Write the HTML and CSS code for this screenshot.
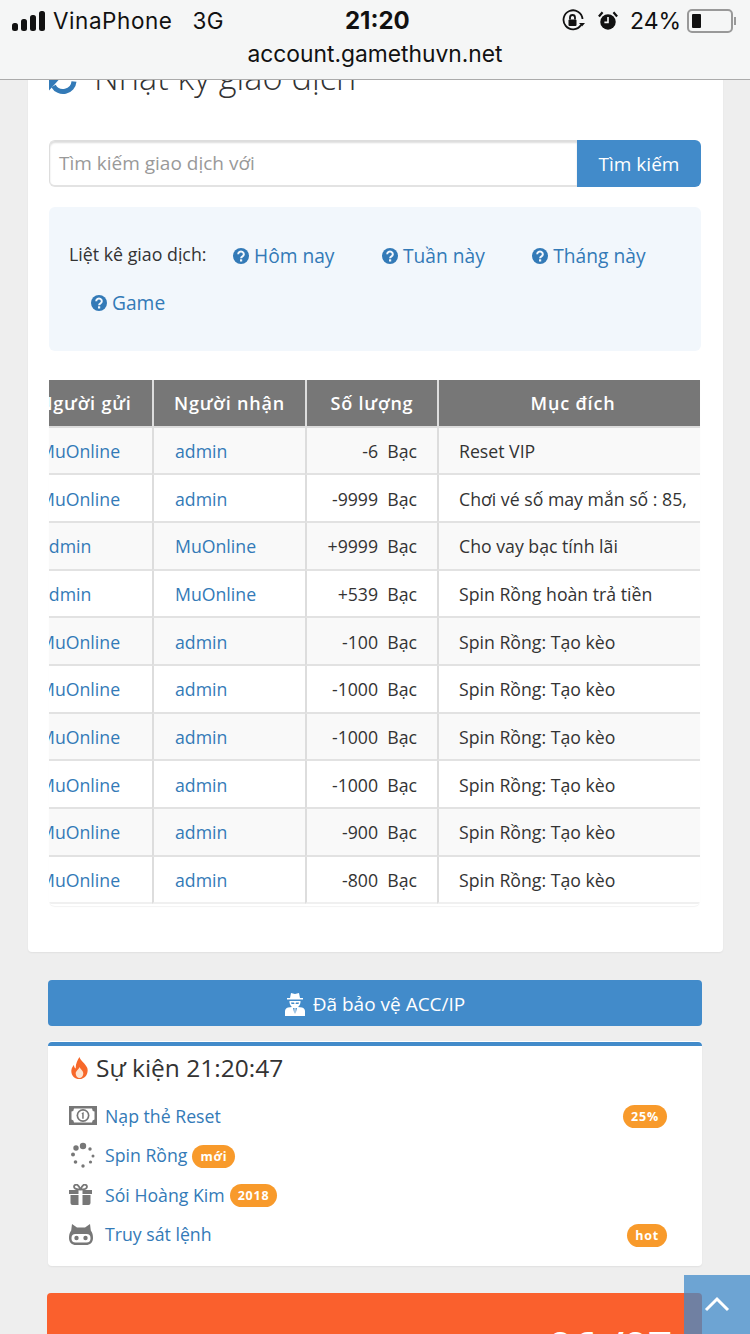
FILE: index.html
```html
<!DOCTYPE html>
<html lang="vi">
<head>
<meta charset="utf-8">
<title>Nhật ký giao dịch</title>
<link rel="stylesheet" href="styles.css">
</head>
<body>
<header class="ios-bar">
  <div class="status">
    <div class="status-left">
      <svg class="signal" width="34" height="20" viewBox="0 0 34 20"><rect x="0" y="12" width="6" height="8" rx="2.5"/><rect x="9" y="8" width="6" height="12" rx="2.5"/><rect x="18" y="4" width="6" height="16" rx="2.5"/><rect x="27" y="0" width="6" height="20" rx="2.5"/></svg>
      <span class="carrier">VinaPhone</span><span class="net">3G</span>
    </div>
    <div class="clock">21:20</div>
    <div class="status-right">
      <svg class="lock" width="24" height="24" viewBox="0 0 24 24" fill="none" stroke="#111" stroke-width="1.8"><path d="M20 16a9.500 9.500 0 1 1 1.500-6"/><path d="M18 14l3 3.500 3-3.500" fill="#111" stroke="none"/><rect x="7.500" y="10.500" width="8" height="6.500" rx="1" fill="#111" stroke="none"/><path d="M9 10.500V8.500a2.500 2.500 0 0 1 5 0v2"/></svg>
      <svg class="alarm" width="20" height="22" viewBox="0 0 22 22"><circle cx="11" cy="12" r="8.500" fill="#111"/><path d="M11 6.500V12.500H7" stroke="#f5f6f6" stroke-width="1.800" fill="none"/><path d="M1 6l4-4.500M21 6l-4-4.500" stroke="#111" stroke-width="2.500"/></svg>
      <span class="pct">24%</span>
      <div class="battery"><i class="level"></i></div><i class="nub"></i>
    </div>
  </div>
  <div class="url">account.gamethuvn.net</div>
</header>

<main class="page">
  <section class="card">
    <h1 class="title">
      <svg class="refresh" width="29" height="29" viewBox="0 0 29 29" fill="none"><path d="M25 15.500a11 11 0 0 1-20.500 4.500" stroke="#337ab7" stroke-width="5"/><path d="M0 13.500h10l-10 11z" fill="#337ab7"/><path d="M4 13a11 11 0 0 1 20-5" stroke="#337ab7" stroke-width="5"/></svg>
      <span>Nhật ký giao dịch</span>
    </h1>

    <form class="search">
      <div class="search-input">Tìm kiếm giao dịch với</div>
      <div class="search-btn">Tìm kiếm</div>
    </form>

    <div class="filter">
      <div class="filter-row">
        <span class="filter-label">Liệt kê giao dịch:</span>
        <a class="filter-link"><svg class="q" viewBox="0 0 16 16"><circle cx="8" cy="8" r="8"/><path d="M5.200 6.200a2.800 2.600 0 1 1 4.300 2.200c-1 .6-1.400 1-1.400 1.800" fill="none" stroke="#f2f7fc" stroke-width="2"/><rect x="7" y="11.300" width="2.200" height="2.200" fill="#f2f7fc"/></svg>Hôm nay</a>
        <a class="filter-link"><svg class="q" viewBox="0 0 16 16"><circle cx="8" cy="8" r="8"/><path d="M5.200 6.200a2.800 2.600 0 1 1 4.300 2.200c-1 .6-1.400 1-1.400 1.800" fill="none" stroke="#f2f7fc" stroke-width="2"/><rect x="7" y="11.300" width="2.200" height="2.200" fill="#f2f7fc"/></svg>Tuần này</a>
        <a class="filter-link"><svg class="q" viewBox="0 0 16 16"><circle cx="8" cy="8" r="8"/><path d="M5.200 6.200a2.800 2.600 0 1 1 4.300 2.200c-1 .6-1.400 1-1.400 1.800" fill="none" stroke="#f2f7fc" stroke-width="2"/><rect x="7" y="11.300" width="2.200" height="2.200" fill="#f2f7fc"/></svg>Tháng này</a>
      </div>
      <div class="filter-row second">
        <a class="filter-link"><svg class="q" viewBox="0 0 16 16"><circle cx="8" cy="8" r="8"/><path d="M5.200 6.200a2.800 2.600 0 1 1 4.300 2.200c-1 .6-1.400 1-1.400 1.800" fill="none" stroke="#f2f7fc" stroke-width="2"/><rect x="7" y="11.300" width="2.200" height="2.200" fill="#f2f7fc"/></svg>Game</a>
      </div>
    </div>

    <div class="table-wrap">
      <table class="tx">
        <colgroup><col class="c1"><col class="c2"><col class="c3"><col class="c4"></colgroup>
        <thead>
          <tr><th>Người gửi</th><th>Người nhận</th><th>Số lượng</th><th>Mục đích</th></tr>
        </thead>
        <tbody>
          <tr><td><a>MuOnline</a></td><td><a>admin</a></td><td class="amt">-6&nbsp; Bạc</td><td>Reset VIP</td></tr>
          <tr><td><a>MuOnline</a></td><td><a>admin</a></td><td class="amt">-9999&nbsp; Bạc</td><td>Chơi vé số may mắn số : 85,</td></tr>
          <tr><td><a>admin</a></td><td><a>MuOnline</a></td><td class="amt">+9999&nbsp; Bạc</td><td>Cho vay bạc tính lãi</td></tr>
          <tr><td><a>admin</a></td><td><a>MuOnline</a></td><td class="amt">+539&nbsp; Bạc</td><td>Spin Rồng hoàn trả tiền</td></tr>
          <tr><td><a>MuOnline</a></td><td><a>admin</a></td><td class="amt">-100&nbsp; Bạc</td><td>Spin Rồng: Tạo kèo</td></tr>
          <tr><td><a>MuOnline</a></td><td><a>admin</a></td><td class="amt">-1000&nbsp; Bạc</td><td>Spin Rồng: Tạo kèo</td></tr>
          <tr><td><a>MuOnline</a></td><td><a>admin</a></td><td class="amt">-1000&nbsp; Bạc</td><td>Spin Rồng: Tạo kèo</td></tr>
          <tr><td><a>MuOnline</a></td><td><a>admin</a></td><td class="amt">-1000&nbsp; Bạc</td><td>Spin Rồng: Tạo kèo</td></tr>
          <tr><td><a>MuOnline</a></td><td><a>admin</a></td><td class="amt">-900&nbsp; Bạc</td><td>Spin Rồng: Tạo kèo</td></tr>
          <tr><td><a>MuOnline</a></td><td><a>admin</a></td><td class="amt">-800&nbsp; Bạc</td><td>Spin Rồng: Tạo kèo</td></tr>
        </tbody>
      </table>
    </div>
  </section>

  <div class="protect">
    <svg width="20" height="24" viewBox="0 0 20 24"><path d="M5 6l1-5 4 1 4-1 1 5h3v1.500H2V6z" fill="#fff"/><path d="M4.500 9h11c.3 2.500-1 5-2.500 6l4 .5c2 .5 3 2 3 4V24H0v-4.500c0-2 1-3.500 3-4l4-.5C5.500 14 4.200 11.500 4.500 9z" fill="#fff"/><path d="M6 10.500h3l.5 1.500H6.500zM11 10.500h3l-.5 1.500h-3z" fill="#428bca"/><path d="M8 16l1.500 6V16zM12 16l-1.500 6V16z" fill="#428bca"/></svg>
    <span>Đã bảo vệ ACC/IP</span>
  </div>

  <section class="events">
    <h2 class="events-title">
      <svg width="17" height="22" viewBox="0 0 17 22"><path d="M8.500 0c1 4 6 6.500 7.800 11 1.500 5-2 11-7.800 11S-.5 17 .5 12.500c.4-2 1.500-3.500 2.500-4.500 0 2 .7 3 1.700 3.500C4.500 7 6.500 3 8.500 0z" fill="#f7682a"/><path d="M8.500 10c.8 2 3.800 3.500 3.800 6.500 0 2.500-1.800 4.500-3.800 4.500s-3.800-2-3.800-4.500c0-2.500 3-4 3.800-6.500z" fill="#fde3cf"/></svg>
      <span>Sự kiện 21:20:47</span>
    </h2>
    <ul class="event-list">
      <li class="event">
        <span class="ev-icon"><svg width="28" height="19" viewBox="0 0 28 19"><rect width="28" height="19" fill="#777"/><path d="M5 2.500h18a3 3 0 0 0 2.500 3v8a3 3 0 0 0-2.500 3H5a3 3 0 0 0-2.500-3v-8A3 3 0 0 0 5 2.500z" fill="#fff"/><circle cx="14" cy="9.500" r="6.500" fill="#777"/><circle cx="14" cy="9.500" r="4.800" fill="#fff"/><path d="M12.500 7.300l2.200-1.300v6.800h-1.500V8.200z" fill="#777"/></svg></span>
        <a>Nạp thẻ Reset</a><span class="badge end">25%</span>
      </li>
      <li class="event">
        <span class="ev-icon"><svg width="26" height="26" viewBox="0 0 26 26" fill="#777"><circle cx="14" cy="4" r="3.200"/><circle cx="7" cy="6" r="2.700"/><circle cx="21" cy="7" r="1.700"/><circle cx="4" cy="12.500" r="2"/><circle cx="24" cy="14" r="1.500"/><circle cx="6.500" cy="20" r="1.800"/><circle cx="21.500" cy="20" r="1.600"/><circle cx="14" cy="24" r="1.700"/></svg></span>
        <a>Spin Rồng</a><span class="badge">mới</span>
      </li>
      <li class="event">
        <span class="ev-icon"><svg width="23" height="21" viewBox="0 0 23 21"><path d="M0 6h9.500v4H0zM13.500 6H23v4h-9.500zM1.500 11h8v10h-6a2 2 0 0 1-2-2zM13.500 11h8v8a2 2 0 0 1-2 2h-6z" fill="#777"/><path d="M11.500 5.500C8 5.500 5 4.500 5 2.700 5 1 7 0 8.500 1s3 4.500 3 4.500zm0 0c3.500 0 6.500-1 6.500-2.800C18 1 16 0 14.500 1s-3 4.500-3 4.500z" fill="none" stroke="#777" stroke-width="1.800"/></svg></span>
        <a>Sói Hoàng Kim</a><span class="badge">2018</span>
      </li>
      <li class="event">
        <span class="ev-icon"><svg width="24" height="21" viewBox="0 0 24 21"><path d="M3 0l5 3.500h8L21 0l.8 6.500C23.500 9 24 11 24 14c0 4.500-3 7-7 7H7c-4 0-7-2.500-7-7 0-3 .5-5 2.200-7.500z" fill="#777"/><rect x="2.500" y="10" width="19" height="8.500" rx="4" fill="#fff"/><circle cx="7.500" cy="14" r="2.200" fill="#777"/><circle cx="16.500" cy="14" r="2.200" fill="#777"/></svg></span>
        <a>Truy sát lệnh</a><span class="badge end">hot</span>
      </li>
    </ul>
  </section>

  <section class="promo"><span class="promo-num">96 /97</span></section>
</main>

<a class="to-top"><svg width="26" height="16" viewBox="0 0 26 16" fill="none" stroke="#fff" stroke-width="3"><path d="M2 14L13 3l11 11"/></svg></a>
</body>
</html>
```
FILE: styles.css
```css
* { box-sizing: border-box; }
html, body { margin: 0; padding: 0; }
body {
  width: 750px;
  height: 1334px;
  overflow: hidden;
  position: relative;
  background: #eeeeee;
  color: #333;
  font-family: "Open Sans", "Noto Sans", sans-serif;
  font-size: 18px;
}
a { color: #337ab7; text-decoration: none; }

.ios-bar {
  position: absolute;
  top: 0; left: 0;
  width: 750px;
  height: 80px;
  z-index: 5;
  background: #f5f6f6;
  border-bottom: 1px solid #ababab;
  font-family: Inter, "Liberation Sans", sans-serif;
  color: #111;
  font-size: 22.5px;
}
.status {
  height: 41px;
  padding: 0 0 0 12px;
  display: flex;
  align-items: center;
  position: relative;
}
.status-left { display: flex; align-items: center; gap: 7px; }
.signal { fill: #111; }
.carrier { letter-spacing: .55px; }
.net { margin-left: 13px; letter-spacing: .5px; }
.clock {
  position: absolute;
  left: 345px;
  font-weight: 700;
  font-size: 24px;
}
.status-right {
  position: absolute;
  left: 561px;
  display: flex;
  align-items: center;
}
.alarm { margin-left: 13px; }
.pct { margin-left: 12px; font-size: 23px; }
.battery {
  width: 46px;
  height: 24px;
  margin-left: 6px;
  border: 2px solid #999;
  border-radius: 5px;
  padding: 3px;
}
.level { display: block; width: 9px; height: 14px; background: #111; border-radius: 1px; }
.nub { display: block; width: 2px; height: 8px; background: #999; margin-left: 1px; }
.url { text-align: center; font-size: 22.800px; line-height: 24px; margin-top: 1px; }

.page { padding: 0 48px 0 48px; }

.card {
  margin-left: -20px;
  width: 695px;
  height: 952px;
  padding: 54px 22px 0 21px;
  background: #fff;
  border-radius: 4px;
  box-shadow: 0 1px 2px rgba(0,0,0,.06);
}
.title {
  margin: 0;
  height: 86px;
  display: flex;
  align-items: flex-start;
  gap: 16px;
  font-weight: 300;
  font-size: 34.300px;
  line-height: 46px;
  color: #333;
}
.refresh { margin-top: 12px; flex: none; }

.search {
  display: flex;
  height: 47px;
  border-radius: 6px;
}
.search-input {
  flex: 1;
  border: 1px solid #ddd;
  border-right: 0;
  border-bottom: 2px solid #e3e3e3;
  box-shadow: inset 0 2px 2px #ddd;
  border-radius: 6px 0 0 6px;
  padding-left: 9px;
  line-height: 44px;
  font-size: 19px;
  color: #999;
}
.search-btn {
  width: 124px;
  background: #428bca;
  color: #fff;
  border-radius: 0 6px 6px 0;
  text-align: center;
  line-height: 48px;
  font-size: 19px;
}

.filter {
  margin-top: 20px;
  height: 144px;
  background: #f2f7fc;
  border-radius: 6px;
  padding: 25px 0 0 20px;
}
.filter-row { display: flex; align-items: center; height: 47px; }
.filter-row.second { padding-left: 22px; }
.filter-label { font-size: 17.800px; width: 164px; margin-top: -4px; }
.filter-link { display: flex; align-items: center; gap: 5px; font-size: 19.200px; margin-right: 47.500px; }
.q { width: 16px; height: 16px; fill: #337ab7; flex: none; }

.table-wrap {
  margin-top: 29px;
  width: 651px;
  height: 526px;
  overflow: hidden;
  border-radius: 0 0 6px 6px;
  box-shadow: 0 1px 1px rgba(0,0,0,.05);
}
.tx {
  border-collapse: separate;
  border-spacing: 0;
  table-layout: fixed;
  width: 689px;
  margin-left: -31px;
  font-size: 17.700px;
}
.c1 { width: 134px; }
.c2 { width: 153px; }
.c3 { width: 132px; }
.c4 { width: 270px; }
.tx th {
  height: 47.500px;
  background: #777;
  color: #fff;
  font-weight: 600;
  font-size: 18px;
  letter-spacing: .8px;
  border-left: 2px solid #ddd;
  border-bottom: 2px solid #ddd;
  text-align: center;
  padding: 0;
}
.tx th:first-child, .tx td:first-child { border-left: 0; }
.tx td {
  height: 47.700px;
  padding: 1px 0 0 20px;
  border-left: 2px solid #ddd;
  border-bottom: 2px solid #e2e2e2;
  white-space: nowrap;
  overflow: hidden;
}
.tx td:nth-child(2) { padding-left: 21px; }
.tx tbody tr:nth-child(odd) td { background: #f9f9f9; }
.tx tbody tr:last-child td { border-bottom-color: #f0f0f0; background: #fff; }
.tx td:first-child { padding-left: 21px; }
.tx td.amt { text-align: right; padding: 1px 20px 0 0; }

.protect {
  margin-top: 28px;
  height: 46px;
  padding-top: 1px;
  border-radius: 4px;
  background: #428bca;
  color: #fff;
  font-size: 19px;
  display: flex;
  align-items: center;
  justify-content: center;
  gap: 8px;
  width: 654px;
}
.events {
  margin-top: 16px;
  width: 654px;
  height: 224px;
  background: #fff;
  border-top: 4px solid #428bca;
  border-radius: 4px;
  box-shadow: 0 -1px 0 #fff, 0 1px 2px rgba(0,0,0,.06);
  padding: 0 35px 0 21px;
}
.events-title {
  margin: 0;
  display: flex;
  align-items: center;
  gap: 8px;
  height: 43px;
  font-weight: 400;
  font-size: 24.500px;
  padding: 0 0 0 2px;
  color: #333;
}
.event-list { list-style: none; margin: 7px 0 0; padding: 0; }
.event { display: flex; align-items: center; height: 39.500px; font-size: 17.700px; }
.ev-icon { width: 36px; flex: none; display: flex; align-items: center; }
.badge {
  display: inline-block;
  background: #f89a2b;
  color: #fff;
  font-weight: 700;
  font-size: 12.500px;
  letter-spacing: .8px;
  line-height: 23px;
  height: 23px;
  padding: 0 8px;
  border-radius: 12px;
  margin: 2px 0 0 5px;
}
.badge.end { margin-left: auto; }

.promo {
  margin-top: 27px;
  width: 655px;
  margin-left: -1px;
  height: 90px;
  background: #fa602d;
  border-radius: 4px 4px 0 0;
  padding: 28px 30px 0 0;
  text-align: right;
  color: #fff;
  font-size: 42px;
  font-weight: 600;
  line-height: 50px;
}

.to-top {
  position: absolute;
  left: 684px;
  top: 1275px;
  width: 66px;
  height: 59px;
  background: rgba(66,139,202,.75);
  display: flex;
  justify-content: center;
  padding-top: 21px;
  z-index: 4;
}
```
